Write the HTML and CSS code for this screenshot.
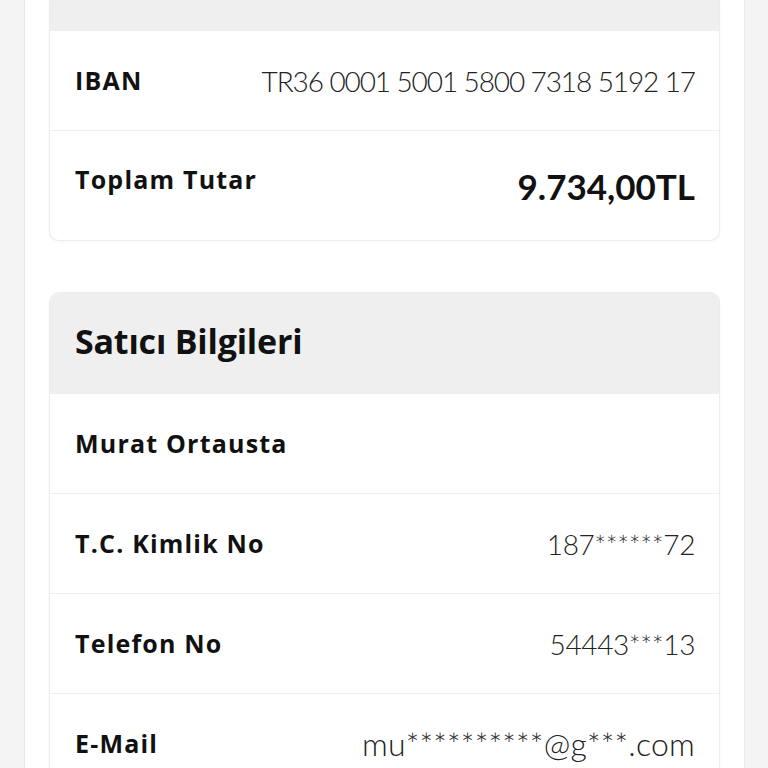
FILE: index.html
```html
<!DOCTYPE html>
<html lang="tr">
<head>
<meta charset="utf-8">
<title>Satıcı Bilgileri</title>
<link rel="stylesheet" href="styles.css">
</head>
<body>
<div class="page">
  <div class="side side-left"></div>
  <main class="panel">
    <section class="card card-first">
      <div class="card-head card-head-cut"></div>
      <div class="row">
        <span class="label">IBAN</span>
        <span class="value value-iban">TR36 0001 5001 5800 7318 5192 17</span>
      </div>
      <div class="row row-total">
        <span class="label label-up">Toplam Tutar</span>
        <span class="value value-total">9.734,00TL</span>
      </div>
    </section>
    <section class="card">
      <div class="card-head"><h2 class="title">Satıcı Bilgileri</h2></div>
      <div class="row">
        <span class="label">Murat Ortausta</span>
      </div>
      <div class="row">
        <span class="label">T.C. Kimlik No</span>
        <span class="value">187******72</span>
      </div>
      <div class="row">
        <span class="label">Telefon No</span>
        <span class="value">54443***13</span>
      </div>
      <div class="row">
        <span class="label">E-Mail</span>
        <span class="value value-mail">mu**********@g***.com</span>
      </div>
    </section>
  </main>
  <div class="side side-right"></div>
</div>
</body>
</html>
```
FILE: styles.css
```css
* { box-sizing: border-box; }
html, body { margin: 0; padding: 0; background: #f4f4f4; }
body { font-family: "Lato", "Noto Sans", sans-serif; color: #111; }
.page { display: flex; width: 768px; height: 768px; overflow: hidden; }
.side { background: #f4f4f4; }
.side-left { width: 25px; border-right: 1px solid #e9e9e9; }
.side-right { width: 24px; border-left: 1px solid #ececec; }
.panel {
  flex: 1;
  background: #fff;
  padding: 0 24px 0 24px;
  display: flex;
  flex-direction: column;
  gap: 51px;
}
.card {
  background: #fff;
  border: 1px solid #ececec;
  border-radius: 10px;
  box-shadow: 0 1px 3px rgba(0,0,0,0.04);
  overflow: hidden;
  flex-shrink: 0;
}
.card-first { border-top: none; border-top-left-radius: 0; border-top-right-radius: 0; }
.card-head {
  background: #efefef;
  height: 101px;
  display: flex;
  align-items: center;
  padding: 0 25px;
}
.card-head-cut { height: 31px; }
.title {
  margin: 0 0 5px 0;
  font-family: "Open Sans", "Lato", sans-serif;
  font-size: 34px;
  font-weight: 700;
  letter-spacing: -0.2px;
  color: #111;
}
.row {
  height: 100px;
  display: flex;
  align-items: center;
  justify-content: space-between;
  padding: 0 24px 0 25px;
  border-top: 1px solid #f0f0f0;
}
.card-head + .row { border-top: none; height: 99px; }
.row-total { height: 110px; }
.label {
  font-family: "Open Sans", "Lato", sans-serif;
  font-size: 25px;
  font-weight: 700;
  letter-spacing: 1.2px;
  color: #111;
  margin-bottom: 2px;
}
.label-up { margin-bottom: 14px; }
.value { font-size: 28px; font-weight: 300; color: #222; letter-spacing: -0.4px; }
.value-iban { letter-spacing: -1.1px; }
.value-total { font-size: 35px; font-weight: 700; color: #111; letter-spacing: 0; }
.value-mail { font-size: 32px; letter-spacing: 0.2px; }
```
